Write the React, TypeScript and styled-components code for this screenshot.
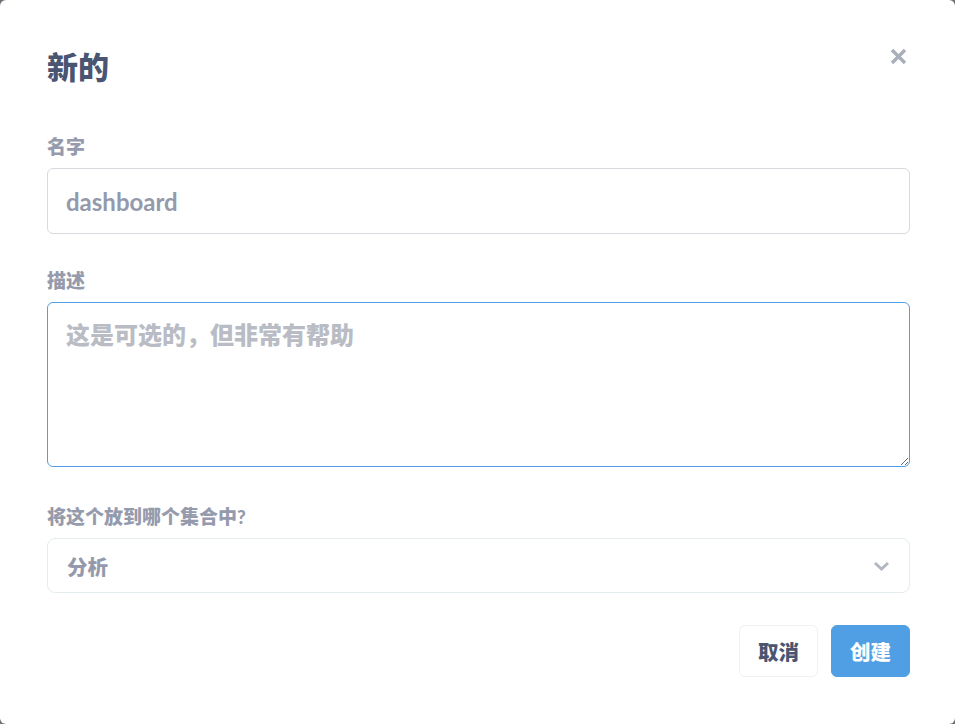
import React from "react";
import styled, { createGlobalStyle } from "styled-components";

const Global = createGlobalStyle`
  html, body { margin: 0; padding: 0; }
  body {
    background: #6f7178;
    font-family: Lato, "Noto Sans CJK SC", sans-serif;
    width: 955px;
    height: 724px;
    overflow: hidden;
  }
  * { box-sizing: border-box; }
`;

const Modal = styled.div`
  width: 955px;
  height: 724px;
  background: #fff;
  border-radius: 6px;
  padding: 44px 45px 0 47px;
  display: flex;
  flex-direction: column;
`;

const Header = styled.div`
  display: flex;
  align-items: flex-start;
  justify-content: space-between;
  margin-bottom: 46px;
`;

const Title = styled.h2`
  margin: 0;
  font-size: 31px;
  line-height: 46px;
  font-weight: 900;
  color: #4a5571;
`;

const Close = styled.button`
  border: 0;
  background: none;
  padding: 0;
  margin: 3px 3px 0 0;
  width: 18px;
  height: 18px;
  display: flex;
  align-items: center;
  justify-content: center;
  cursor: pointer;
`;

const Field = styled.div<{ $gap?: number }>`
  display: flex;
  flex-direction: column;
  margin-bottom: ${(p) => p.$gap ?? 36}px;
`;

const Label = styled.label`
  font-size: 19px;
  line-height: 22px;
  font-weight: 900;
  color: #959bac;
  margin-bottom: 10px;
`;

const TextInput = styled.input`
  height: 66px;
  border: 1px solid #d6d9de;
  border-radius: 6px;
  padding: 0 18px;
  font-family: inherit;
  font-size: 24px;
  font-weight: 700;
  color: #949aab;
  outline: none;
  background: #fff;
`;

const TextArea = styled.textarea`
  height: 165px;
  border: 1px solid #509ee3;
  border-radius: 6px;
  padding: 14px 18px;
  font-family: inherit;
  font-size: 24px;
  line-height: 36px;
  font-weight: 900;
  color: #4a5571;
  caret-color: #2e3548;
  outline: none;
  background: #fff;
  resize: vertical;
  &::placeholder {
    color: #b9bcc4;
  }
`;

const Select = styled.div`
  height: 55px;
  border: 1px solid #e4ecef;
  border-radius: 8px;
  padding: 0 19px 0 19px;
  display: flex;
  align-items: center;
  justify-content: space-between;
  font-size: 20.5px;
  font-weight: 900;
  color: #949aab;
`;

const Footer = styled.div`
  display: flex;
  justify-content: flex-end;
  gap: 13px;
  margin-top: 32px;
`;

const Button = styled.button<{ $primary?: boolean }>`
  height: 52px;
  min-width: 79px;
  padding: 0 18px;
  border-radius: 6px;
  border: 1px solid ${(p) => (p.$primary ? "#509ee3" : "#eef0f3")};
  background: ${(p) => (p.$primary ? "#509ee3" : "#fff")};
  color: ${(p) => (p.$primary ? "#fff" : "#4a5571")};
  font-family: inherit;
  font-size: 20.5px;
  font-weight: 900;
  cursor: pointer;
`;

export default function App() {
  return (
    <>
      <Global />
      <Modal>
        <Header>
          <Title>新的</Title>
          <Close aria-label="close">
            <svg width="17" height="17" viewBox="0 0 17 17">
              <path d="M2 2 L15 15 M15 2 L2 15" stroke="#a8aeba" strokeWidth="3.4" strokeLinecap="butt" />
            </svg>
          </Close>
        </Header>
        <Field>
          <Label>名字</Label>
          <TextInput defaultValue="dashboard" />
        </Field>
        <Field $gap={39}>
          <Label>描述</Label>
          <TextArea autoFocus placeholder="这是可选的，但非常有帮助" />
        </Field>
        <Field $gap={0}>
          <Label>将这个放到哪个集合中?</Label>
          <Select>
            <span>分析</span>
            <svg width="17" height="10" viewBox="0 0 17 10">
              <path d="M2 2 L8.5 8 L15 2" fill="none" stroke="#b2b7c2" strokeWidth="3" />
            </svg>
          </Select>
        </Field>
        <Footer>
          <Button>取消</Button>
          <Button $primary>创建</Button>
        </Footer>
      </Modal>
    </>
  );
}
